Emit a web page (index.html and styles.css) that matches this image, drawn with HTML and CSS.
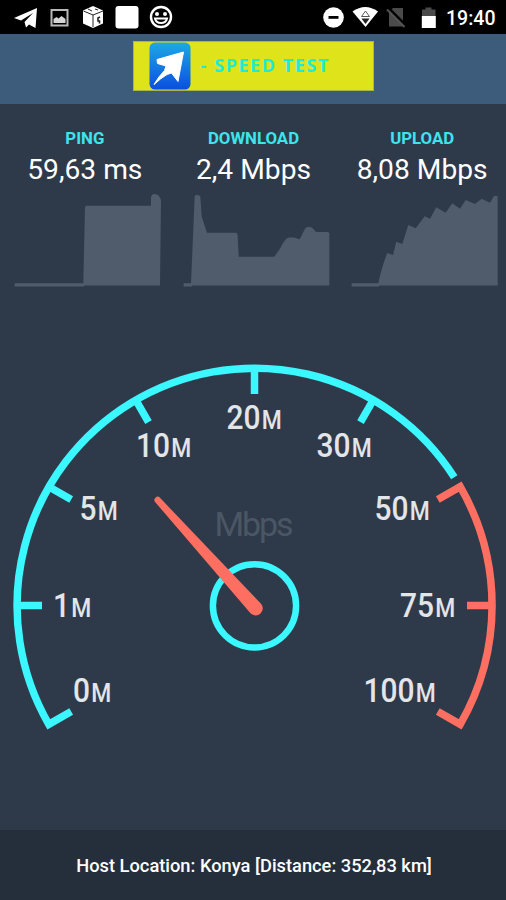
FILE: index.html
```html
<!DOCTYPE html>
<html lang="en">
<head>
    <meta charset="UTF-8">
    <meta name="viewport" content="width=device-width, initial-scale=1.0">
    <title>Speed Test</title>
    <link rel="stylesheet" href="styles.css">
</head>
<body>

    <div class="status-bar">
        <svg class="status-icons" width="180" height="34" viewBox="0 0 180 34">
            <path fill="#fff" d="M14 18 37 8 35.500 28 29 24.500 26 27.500 24.500 22 33 13 21 20.500Z"/>
            <path fill="none" stroke="#b8b8b8" stroke-width="2" d="M51.500 10h16v15.500h-16z"/>
            <path fill="#d5d5d5" d="M53.500 23v-4l3-2 2 1.500 3-2.500 4 3v4z"/>
            <path fill="#fff" d="M93 6l10 4.500v13L93 28l-10-4.500v-13z"/>
            <path fill="none" stroke="#222" d="M83.500 11 93 15l10-4M93 15v12M88 9l4 2M95 9l3 1"/>
            <path fill="none" stroke="#222" stroke-width="1.600" d="M100 17l-2 1v3l1.500 0v2.500"/>
            <rect x="115.500" y="6" width="23" height="22.500" rx="3" fill="#fff"/>
            <circle cx="161" cy="17" r="10" fill="none" stroke="#fff" stroke-width="2.400"/>
            <circle cx="157" cy="14" r="2" fill="#fff"/>
            <circle cx="165" cy="14" r="2" fill="#fff"/>
            <path fill="none" stroke="#fff" stroke-width="2" d="M155 18.500h12q-1 4.500-6 4.500t-6-4.500z"/>
        </svg>
        <div class="status-right">
            <svg width="120" height="34" viewBox="320 0 120 34">
                <circle cx="333.500" cy="17.500" r="10.300" fill="#fff"/>
                <path fill="#000" d="M328.500 16h10v2.800h-10z"/>
                <path fill="#fff" d="M352.500 11.500q12.800-9 25.500 0L365.500 27z"/>
                <path fill="none" stroke="#555" d="M361.500 16.500l4-5.500 4 5.500z"/>
                <path fill="#222" d="M361.500 18.500h8l-4 5.500z"/>
                <path fill="#4a4a4a" d="M389 12l4-4h10v18.500h-14z"/>
                <path stroke="#000" stroke-width="2.500" d="M388.500 8 406 25.500"/>
                <path stroke="#555" stroke-width="1.800" d="M387 9.500 404.500 27"/>
                <path fill="#4a4a4a" d="M422 16V9.500h3.500V7.500h6v2h4V16z"/>
                <path fill="#fff" d="M421.800 16h14v12h-14z"/>
            </svg>
            <span class="clock">19:40</span>
        </div>
    </div>

    <header class="header">
        <div class="banner">
            <svg class="logo" width="42" height="48" viewBox="0 0 42 48">
                <defs>
                    <linearGradient id="logoFill" x1="0" y1="0" x2="0" y2="1">
                        <stop offset="0" stop-color="#1ea8e6"/>
                        <stop offset="1" stop-color="#0b4fe0"/>
                    </linearGradient>
                </defs>
                <rect x="0.500" y="0.500" width="41" height="47" rx="5.500" fill="url(#logoFill)"/>
                <path fill="#fff" stroke="#fff" stroke-linejoin="round" d="M34.500 10 29 39.500 22.500 31 18 32.500Q12 36 5 42.500 10 34 15.500 28.500L17 24 8.500 21.500 8 17.500Z"/>
            </svg>
            <h1 class="title">- SPEED TEST</h1>
        </div>
    </header>

    <main class="content">
        <section class="stats">
            <div class="stat">
                <div class="stat-label">PING</div>
                <div class="stat-value">59,63 ms</div>
                <svg class="chart" viewBox="0 0 168 100">
                    <path d="M14.700 93.300H83.300L85 17l1.300-1.300H151V8q0-4 4-4t6 6L160 95.500H84v1H14.700z"/>
                </svg>
            </div>
            <div class="stat">
                <div class="stat-label">DOWNLOAD</div>
                <div class="stat-value">2,4 Mbps</div>
                <svg class="chart" viewBox="0 0 168 100">
                    <path d="M14.700 93.300H22L25.700 6 28 4.700 31.300 6 32.700 26.700 38 42.700H66.500Q68.500 42.700 68.600 45L69.700 66.700H105.300L111.300 58.300Q116 48 120 47.500H125L130.700 49.300 136.300 38.300Q141 34 147 42H159L160.300 43V95.500H23v1h-8.300z"/>
                </svg>
            </div>
            <div class="stat">
                <div class="stat-label">UPLOAD</div>
                <div class="stat-value">8,08 Mbps</div>
                <svg class="chart" viewBox="0 0 168 100">
                    <path d="M14.700 93.300H41.300Q45 76 50.300 63L56 65 59.300 51.700 65.300 54 71.300 35 78.700 38.300 87.700 26.300 93 28.700 99.300 17.300 108.700 22.700 115.300 13.300 123 18.700 128.700 10 138 14 144.700 8.700 153 12.700 157 6 160.700 6V95.500H42v1H14.700z"/>
                </svg>
            </div>
        </section>

        <svg class="gauge" width="506" height="400" viewBox="0 350 506 400">
            <text class="unit" x="214.500" y="535.500" textLength="79">Mbps</text>

            <!-- scale -->
            <g class="scale">
                <path d="M71.200 711.400 48.800 724.300A237.500 237.500 0 0 1 454.300 477.200"/>
                <path d="M42 605.500H17M71.200 499.600 48.800 486.700M148.500 422.100 135.700 399.800M254.500 394V368M360.500 422.100 373.300 399.800"/>
            </g>
            <g class="scale scale-high">
                <path d="M437.800 499.600 460.200 486.700A237.500 237.500 0 0 1 460.200 724.300L437.800 711.400"/>
                <path d="M467 605.500H492"/>
            </g>

            <g class="ticks">
                <text transform="translate(73 701.700) scale(.88 1)">0<tspan dx="1.500">M</tspan></text>
                <text transform="translate(53 616.700) scale(.88 1)">1<tspan dx="1.500">M</tspan></text>
                <text transform="translate(79.500 520) scale(.88 1)">5<tspan dx="1.500">M</tspan></text>
                <text transform="translate(136 457) scale(.88 1)">10<tspan dx="1.500">M</tspan></text>
                <text transform="translate(226.500 429) scale(.88 1)">20<tspan dx="1.500">M</tspan></text>
                <text transform="translate(316.500 457) scale(.88 1)">30<tspan dx="1.500">M</tspan></text>
                <text transform="translate(374.500 520) scale(.88 1)">50<tspan dx="1.500">M</tspan></text>
                <text transform="translate(400 616.700) scale(.88 1)">75<tspan dx="1.500">M</tspan></text>
                <text transform="translate(363.500 701.700) scale(.88 1)">100<tspan dx="1.500">M</tspan></text>
            </g>

            <!-- needle -->
            <circle class="hub" cx="254.500" cy="605.800" r="41.600"/>
            <path class="needle" d="M155.300 502.200A3.200 3.200 0 0 1 160 497.800L260.800 603.600A7 7 0 0 1 250.500 613.300Z"/>
        </svg>
    </main>

    <footer class="footer">Host Location: Konya [Distance: 352,83 km]</footer>

</body>
</html>
```

FILE: styles.css
```css
* {
    box-sizing: border-box;
}

body {
    margin: 0;
    height: 100vh;
    display: flex;
    flex-direction: column;
    overflow: hidden;
    background: #2e3a49;
    color: #fff;
    font-family: Roboto, sans-serif;
}

svg {
    display: block;
}

.status-bar {
    height: 34px;
    display: flex;
    justify-content: space-between;
    background: #000;
}

.status-right {
    display: flex;
    align-items: center;
    padding-right: 10px;
}

.clock {
    width: 50px;
    margin-left: 6px;
    font-size: 19.5px;
    font-weight: 500;
    line-height: 34px;
    padding-top: 3px;
    white-space: nowrap;
}

.header {
    height: 70px;
    padding-top: 7px;
    background: #3d5b7a;
}

.banner {
    width: 241px;
    height: 50px;
    margin: 0 auto;
    padding-left: 15px;
    display: flex;
    align-items: center;
    gap: 10px;
    background: #dfe31a;
    border: 1px solid #a9b44a;
}

.title {
    margin: 0;
    padding-bottom: 2px;
    font-family: "Noto Sans", sans-serif;
    font-size: 18px;
    font-weight: 700;
    letter-spacing: 1.6px;
    color: #1cecdc;
    white-space: nowrap;
}

.content {
    flex: 1;
}

.stats {
    display: grid;
    grid-template-columns: repeat(3, 1fr);
    height: 246px;
    padding-top: 24px;
    text-align: center;
}

.stat-label {
    padding-left: 1px;
    font-size: 16.8px;
    font-weight: 700;
    line-height: 20px;
    color: #3fe3ee;
}

.stat-value {
    padding-left: 1px;
    font-size: 28.2px;
    line-height: 43px;
    height: 42px;
    white-space: nowrap;
}

.chart {
    width: 168px;
    height: 100px;
    fill: #505c6b;
}

.scale {
    fill: none;
    stroke: #3bf7ff;
    stroke-width: 7.5;
}

.scale-high {
    stroke: #ff6f61;
}

.ticks {
    fill: #e3e5e9;
    font-size: 34px;
    font-weight: 500;
}

.ticks tspan {
    font-size: 26px;
}

.unit {
    fill: #4b5665;
    font-size: 34px;
    font-weight: 400;
}

.hub {
    fill: none;
    stroke: #3bf7ff;
    stroke-width: 6.5;
}

.needle {
    fill: #ff6f61;
}

.footer {
    height: 70px;
    padding-left: 2px;
    line-height: 72px;
    text-align: center;
    font-size: 18.3px;
    font-weight: 500;
    background: #252f3b;
}
```
